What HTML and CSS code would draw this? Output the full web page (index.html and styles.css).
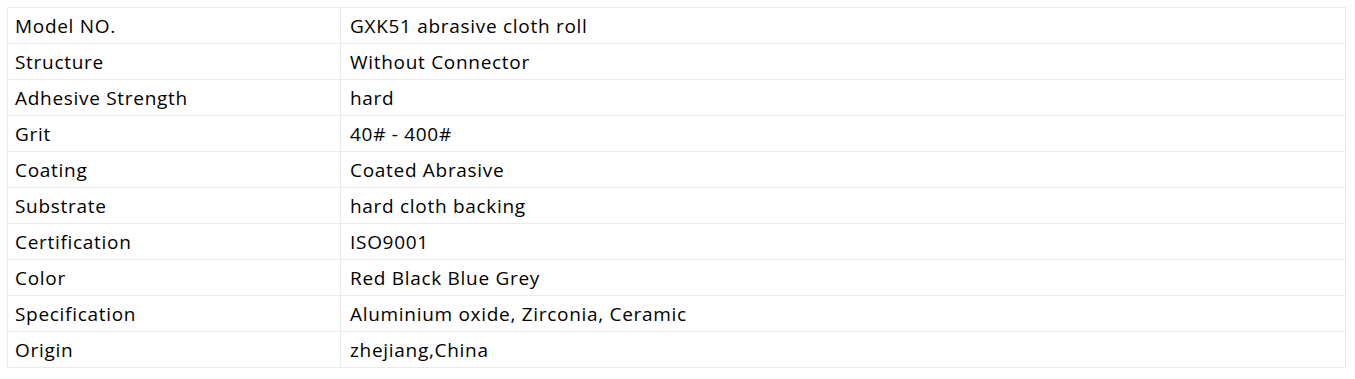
FILE: index.html
```html
<!DOCTYPE html>
<html>
<head>
<meta charset="utf-8">
<link rel="stylesheet" href="styles.css">
</head>
<body>
<table class="spec">
<tbody>
<tr><td class="k">Model NO.</td><td>GXK51 abrasive cloth roll</td></tr>
<tr><td class="k">Structure</td><td>Without Connector</td></tr>
<tr><td class="k">Adhesive Strength</td><td>hard</td></tr>
<tr><td class="k">Grit</td><td>40# - 400#</td></tr>
<tr><td class="k">Coating</td><td>Coated Abrasive</td></tr>
<tr><td class="k">Substrate</td><td>hard cloth backing</td></tr>
<tr><td class="k">Certification</td><td>ISO9001</td></tr>
<tr><td class="k">Color</td><td>Red Black Blue Grey</td></tr>
<tr><td class="k">Specification</td><td>Aluminium oxide, Zirconia, Ceramic</td></tr>
<tr><td class="k">Origin</td><td>zhejiang,China</td></tr>
</tbody>
</table>
</body>
</html>
```
FILE: styles.css
```css
html, body { margin: 0; padding: 0; background: #fff; }
body { padding: 7px; }
.spec {
  border-collapse: collapse;
  width: 1339px;
  font-family: "Open Sans", "Noto Sans", sans-serif;
  font-size: 19px;
  letter-spacing: 0.7px;
  color: #000;
}
.spec td {
  border: 1px solid #ebebeb;
  height: 35px;
  padding: 0 0 0 9px;
  line-height: 20px;
  vertical-align: middle;
}
.spec td.k { width: 325px; padding-left: 7px; }
```
